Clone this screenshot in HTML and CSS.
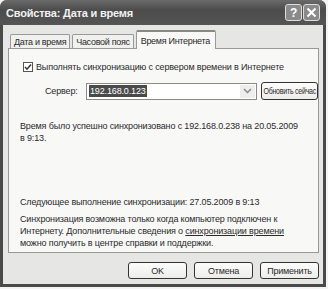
FILE: index.html
```html
<!DOCTYPE html>
<html lang="ru">
<head>
<meta charset="UTF-8">
<title>Свойства: Дата и время</title>
<link rel="stylesheet" href="styles.css">
</head>
<body>
  <div class="window">
    <div class="titlebar">
      <span class="title">Свойства: Дата и время</span>
      <span class="tbtn">?</span>
      <span class="tbtn close">
        <svg width="11" height="11" viewBox="0 0 11 11"><path d="M1.5 1.5 L9.5 9.5 M9.5 1.5 L1.5 9.5" stroke="#fff" stroke-width="2"/></svg>
      </span>
    </div>
    <div class="content">
      <div class="tabs">
        <div class="tab">Дата и время</div>
        <div class="tab">Часовой пояс</div>
        <div class="tab active">Время Интернета</div>
      </div>
      <div class="panel">
        <label class="check-row">
          <span class="checkbox">
            <svg width="8" height="8" viewBox="0 0 8 8"><path d="M1 4 L3 6.2 L7 1.5" fill="none" stroke="#333" stroke-width="1.5"/></svg>
          </span>
          Выполнять синхронизацию с сервером времени в Интернете
        </label>
        <div class="server-row">
          <span class="server-label">Сервер:</span>
          <div class="combo">
            <span class="combo-value">192.168.0.123</span>
            <span class="combo-arrow">
              <svg width="9" height="6" viewBox="0 0 9 6"><path d="M1 1 L4.5 4.5 L8 1" fill="none" stroke="#888" stroke-width="1.5"/></svg>
            </span>
          </div>
          <button class="btn small"><span class="squeeze">Обновить сейчас</span></button>
        </div>
        <p class="status">Время было успешно синхронизовано с 192.168.0.238 на 20.05.2009<br>в 9:13.</p>
        <p class="next">Следующее выполнение синхронизации: 27.05.2009 в 9:13</p>
        <p class="note">Синхронизация возможна только когда компьютер подключен к<br>Интернету. Дополнительные сведения о <span class="link">синхронизации времени</span><br>можно получить в центре справки и поддержки.</p>
      </div>
      <div class="buttons">
        <button class="btn">OK</button>
        <button class="btn">Отмена</button>
        <button class="btn">Применить</button>
      </div>
    </div>
  </div>
</body>
</html>
```

FILE: styles.css
```css
body {
  margin: 0;
  background-color: #f4f4f4;
  font-family: "Liberation Sans", Arial, sans-serif;
  font-size: 9px;
  letter-spacing: -0.15px;
  color: #2a2a2a;
}

.window {
  width: 326px;
  height: 287px;
  display: flex;
  flex-direction: column;
  background-color: #e6e6e4;
  border: 3px solid #4a4a4a;
  border-top: none;
  border-radius: 7px 7px 0 0;
  box-sizing: border-box;
}

.titlebar {
  height: 25px;
  margin: 0 -3px;
  padding: 0 6px 0 6px;
  display: flex;
  align-items: center;
  gap: 1px;
  background: linear-gradient(#6a6a6a, #4c4c4c 40%, #555 100%);
  border-radius: 7px 7px 0 0;
}

.title {
  flex: 1;
  color: #f2f2f2;
  font-weight: bold;
  font-size: 11px;
  letter-spacing: -0.2px;
}

.tbtn {
  width: 15px;
  height: 15px;
  display: flex;
  align-items: center;
  justify-content: center;
  border: 1px solid #ddd;
  border-radius: 3px;
  background-color: #8a8a8a;
  color: #fff;
  font-weight: bold;
  font-size: 12px;
}

.content {
  flex: 1;
  display: flex;
  flex-direction: column;
  padding: 5px 4px 0 5px;
}

.tabs {
  display: flex;
  align-items: flex-end;
  gap: 2px;
  padding-left: 2px;
  height: 18px;
}

.tab {
  height: 15px;
  padding: 0 3px;
  display: flex;
  align-items: center;
  border: 1px solid #999;
  border-bottom: none;
  border-radius: 2px 2px 0 0;
  background-color: #f0f0ee;
  margin-bottom: -1px;
  box-sizing: border-box;
  letter-spacing: -0.3px;
}

.tab.active {
  height: 19px;
  padding: 0 5px 0 4px;
  background-color: #f8f8f7;
  position: relative;
  z-index: 1;
  border-top: 2px solid #888;
}

.panel {
  height: 205px;
  box-sizing: border-box;
  border: 1px solid #999;
  background-color: #f8f8f7;
  padding: 12px 0 0 14px;
}

.check-row {
  display: flex;
  align-items: center;
  gap: 3px;
  height: 12px;
}

.checkbox {
  width: 8px;
  height: 8px;
  border: 1px solid #555;
  background-color: #fff;
  display: flex;
  align-items: center;
  justify-content: center;
}

.server-row {
  display: flex;
  align-items: center;
  margin-top: 9px;
  padding-left: 22px;
}

.server-label {
  width: 41px;
}

.combo {
  width: 171px;
  height: 17px;
  box-sizing: border-box;
  border: 1px solid #8a8a8a;
  background-color: #fff;
  display: flex;
  align-items: center;
  padding-left: 2px;
  flex-shrink: 0;
}

.combo-value {
  background-color: #4a4a4a;
  color: #fff;
  padding: 1px 1px;
  margin-right: auto;
}

.combo-arrow {
  width: 15px;
  height: 13px;
  display: flex;
  align-items: center;
  justify-content: center;
  background-color: #eee;
  margin-right: 1px;
}

.btn {
  font-family: inherit;
  font-size: 9px;
  letter-spacing: -0.2px;
  color: #2a2a2a;
  background: linear-gradient(#fdfdfd, #ecece9);
  border: 1px solid #333;
  border-radius: 3px;
  width: 59px;
  height: 17px;
  padding: 0;
  white-space: nowrap;
}

.btn.small {
  width: 57px;
  height: 18px;
  margin-left: 4px;
  flex-shrink: 0;
  display: flex;
  align-items: center;
  justify-content: center;
  overflow: visible;
  letter-spacing: -0.3px;
}

.squeeze {
  display: inline-block;
  flex-shrink: 0;
  transform: scaleX(0.78);
}

.status {
  margin: 20px 0 0 -3px;
  line-height: 12px;
}

.next {
  margin: 52px 0 0 -3px;
  line-height: 12px;
}

.note {
  margin: 5px 0 0 -3px;
  line-height: 12px;
}

.link {
  text-decoration: underline;
}

.buttons {
  display: flex;
  justify-content: flex-end;
  gap: 7px;
  padding: 9px 0 0 0;
}
```
